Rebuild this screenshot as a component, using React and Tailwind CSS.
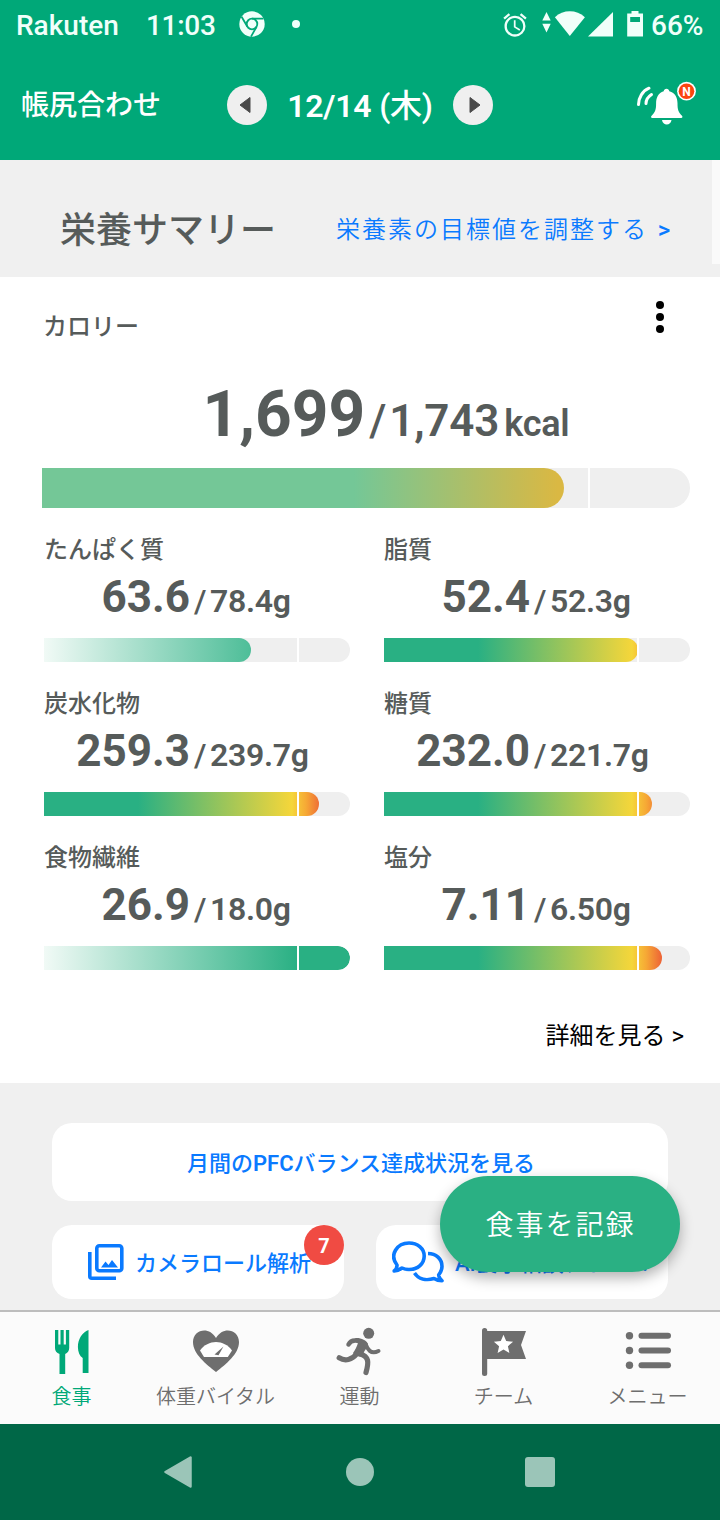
import React from "react";
import { MdAlarm } from "react-icons/md";

const NUTRIENTS = [
  { name: "たんぱく質", value: "63.6", goal: "78.4g", fill: 207, tone: "mint" },
  { name: "脂質", value: "52.4", goal: "52.3g", fill: 254, tone: "heat" },
  { name: "炭水化物", value: "259.3", goal: "239.7g", fill: 275, tone: "heat" },
  { name: "糖質", value: "232.0", goal: "221.7g", fill: 268, tone: "heat" },
  { name: "食物繊維", value: "26.9", goal: "18.0g", fill: 306, tone: "mint" },
  { name: "塩分", value: "7.11", goal: "6.50g", fill: 278, tone: "heat" },
];

const TONES = {
  mint: "bg-[linear-gradient(90deg,#f1faf6_0px,#29b083_254px)]",
  heat: "bg-[linear-gradient(90deg,#29b083_0px,#29b083_94px,#f5d63a_248px,#f6a935_262px,#ed6236_278px)]",
};

function StatusBar() {
  return (
    <div className="flex h-12 items-center pt-1 pl-4 text-[28px] leading-[46px] font-medium text-[#f0fffa]">
      <span className="w-[130px]">Rakuten</span>
      <span className="w-[93px] tracking-[-0.3px]">11:03</span>
      <svg className="mt-[-4px] h-[26px] w-[26px]" viewBox="0 0 26 26">
        <circle cx="13" cy="13" r="12.7" fill="#f0fffa" />
        <g fill="none" stroke="#00a878" strokeWidth="1.8">
          <circle cx="13" cy="13" r="5.3" />
          <path d="M13 7.7H24.5M8.4 15.7L2.6 5.8M17.6 15.7L12 25.6" />
        </g>
      </svg>
      <span className="mt-[-4px] ml-[27px] h-2 w-2 rounded-full bg-[#f0fffa]" />
      <MdAlarm className="mt-[-3px] ml-[201px] h-7 w-7" />
      <svg className="mt-[-4px] ml-[11px] h-[28px] w-[104px]" viewBox="0 0 104 28" fill="#f0fffa">
        <path d="M6.500 2l4.200 8.500H2.300zM6.500 22.500l4.200-8.700H2.300z" />
        <path d="M29.800 26L14.900 7.200C23-.6 36.500-.6 44.900 7.200z" />
        <path d="M73 2v24.500H48z" />
        <path fillRule="evenodd" d="M91.500 1h7v2.500h4.500v23H87.200v-23h4.300zM90.200 7v5h9.800V7z" />
      </svg>
      <span className="ml-[7px]">66%</span>
    </div>
  );
}

function Arrow({ flip }) {
  return (
    <button className="flex h-10 w-10 items-center justify-center rounded-full bg-[#efefef]">
      <svg
        className={flip ? "ml-1 h-[18px] w-3 rotate-180" : "mr-1 h-[18px] w-3"}
        viewBox="0 0 12 18"
      >
        <path d="M11 1.500v15L1 9z" fill="#4a4a4a" stroke="#4a4a4a" strokeLinejoin="round" strokeWidth="1" />
      </svg>
    </button>
  );
}

function Header() {
  return (
    <div className="flex h-28 items-start pl-[21px] text-white">
      <span className="mt-[37px] w-[206px] text-[28px] leading-[42px] font-medium">帳尻合わせ</span>
      <div className="mt-[37px] flex h-10 w-[266px] items-center justify-between">
        <Arrow />
        <span className="pt-[2px] text-[32px] leading-[38px] font-semibold tracking-[-0.2px] whitespace-nowrap">
          12/14 <span className="font-medium">(木)</span>
        </span>
        <Arrow flip />
      </div>
      <svg className="mt-[32px] ml-[141px] h-[48px] w-[66px]" viewBox="0 0 66 48">
        <g fill="none" stroke="#fff" strokeWidth="3" strokeLinecap="round">
          <path d="M4.500 24.500C4.500 18 8.500 10.800 15 8.200M12 23.500C12 20 14.500 16.500 17.500 14.500" />
        </g>
        <path
          d="M32.500 8.800c1.600 0 2.500 1 2.800 2.500 6 1.500 8.200 6.500 8.200 12 0 7 1 9 4.500 12.500.8 1 .5 2.200-.8 2.200H18.400c-1.500 0-1.800-1.200-.8-2.200 3.500-3.500 4.500-5.500 4.500-12.500 0-5.500 2.200-10.500 7.600-12 .3-1.500 1.200-2.500 2.800-2.500zM28 40h9.500c-.4 2.800-2.300 4.500-4.700 4.500S28.400 42.800 28 40z"
          fill="#fff"
        />
        <circle cx="52.500" cy="11.200" r="9.400" fill="#fff" />
        <circle cx="52.500" cy="11.200" r="7.800" fill="#fb4510" />
        <text x="52.500" y="15.600" textAnchor="middle" fontSize="12" fontWeight="700" fill="#fff">N</text>
      </svg>
    </div>
  );
}

function Nutrient({ item }) {
  return (
    <div className="h-[154px]">
      <div className="h-9 pt-px text-[24px] leading-9 font-medium">{item.name}</div>
      <div className="flex h-[60px] items-baseline leading-[60px] whitespace-nowrap">
        <span className="w-[146px] text-right text-[44px] font-bold">{item.value}</span>
        <span className="ml-1 w-4 text-[32px] font-medium">/</span>
        <span className="text-[32px] font-semibold tracking-[-0.3px]">{item.goal}</span>
      </div>
      <div className="relative mt-[11px] h-6 overflow-hidden rounded-r-full bg-[#efefef]">
        <div className={`h-6 rounded-r-full ${TONES[item.tone]}`} style={{ width: item.fill }} />
        <div className="absolute top-0 left-[253px] h-6 w-[2px] bg-white" />
      </div>
    </div>
  );
}

function Summary() {
  return (
    <section className="h-[806px] bg-white">
      <div className="flex h-[92px] justify-between pr-14 pl-[43px]">
        <span className="mt-8 text-[24px] leading-9 font-medium">カロリー</span>
        <div className="mt-6 flex flex-col gap-1">
          <span className="h-2 w-2 rounded-full bg-black" />
          <span className="h-2 w-2 rounded-full bg-black" />
          <span className="h-2 w-2 rounded-full bg-black" />
        </div>
      </div>
      <div className="flex h-[99px] items-baseline justify-center pt-[2px] pl-[52px] leading-[88px]">
        <span className="text-[64px] font-bold">1,699</span>
        <span className="mr-[3px] ml-1 text-[44px] font-medium">/</span>
        <span className="text-[44px] font-semibold tracking-[-0.2px]">1,743</span>
        <span className="ml-[5px] text-[36px] font-semibold tracking-[-0.2px]">kcal</span>
      </div>
      <div className="relative mr-[30px] ml-[42px] h-10 overflow-hidden rounded-r-full bg-[#efefef]">
        <div className="h-10 w-[522px] rounded-r-full bg-[linear-gradient(90deg,#74c797_0px,#74c797_312px,#dab843_516px)]" />
        <div className="absolute top-0 left-[546px] h-10 w-[2px] bg-white" />
      </div>
      <div className="mt-[23px] grid grid-cols-[306px_306px] gap-x-[34px] pl-11">
        {NUTRIENTS.map((item) => (
          <Nutrient key={item.name} item={item} />
        ))}
      </div>
      <div className="mt-[25px] pr-9 text-right text-[24px] leading-9 text-black">詳細を見る &gt;</div>
    </section>
  );
}

function Actions() {
  return (
    <section className="relative flex h-[227px] flex-col gap-6 bg-[#f0f0f0] px-[52px] pt-10 text-[22px] font-medium text-[#0a7aff]">
      <button className="h-[78px] shrink-0 rounded-[20px] bg-white pt-[3px] pl-[2px] leading-[75px]">
        月間の<span className="font-semibold">PFC</span>バランス達成状況を見る
      </button>
      <div className="flex justify-between">
        <div className="relative flex h-[74px] w-[292px] items-center rounded-[20px] bg-white pl-9 whitespace-nowrap">
          <svg className="h-9 w-9" viewBox="0 0 36 36">
            <rect x="8.800" y="1.800" width="25" height="25" rx="2.500" fill="none" stroke="#0a7aff" strokeWidth="3.600" />
            <path d="M1.800 8v24.200a2 2 0 0 0 2 2H28" fill="none" stroke="#0a7aff" strokeWidth="3.600" />
            <path d="M13 23.500l4.500-6 3 3.500 3.500-5 6 7.500z" fill="#0a7aff" />
          </svg>
          <span className="ml-[11px] pt-[2px]">カメラロール解析</span>
          <span className="absolute top-0 right-0 flex h-10 w-10 items-center justify-center rounded-full bg-[#f04b43] pt-px text-[20px] font-bold text-white">
            7
          </span>
        </div>
        <div className="flex h-[74px] w-[292px] items-center rounded-[20px] bg-white pl-4 whitespace-nowrap">
          <svg className="h-[42px] w-[52px]" viewBox="0 0 52 42" fill="none" stroke="#0a7aff" strokeWidth="3.600" strokeLinejoin="round">
            <path d="M2.200 30c2-1.600 3-3.600 2.800-6C-3 14 5 2 17 2c8.500 0 15.200 5.500 15.200 13S26 28.500 17 28.500c-2.600 0-5-.5-7-1.500-2.400 1.800-5 2.800-7.800 3z" />
            <path d="M36 12.500C44 12.500 50 18 50 25.500c0 3.500-1.400 6-3.300 8.300.2 2.500 1.200 4.600 3.300 6-3.500 0-6-1-8-2.300-8 2.500-15.500.5-19.500-5.500" />
          </svg>
          <span className="ml-[11px] pt-[2px]">AI食事相談アドバ...</span>
        </div>
      </div>
      <button className="absolute top-[93px] left-[440px] h-24 w-60 rounded-full bg-[#2ab083] pt-[4px] pl-px text-[28px] leading-[92px] font-[350] tracking-[2px] text-white shadow-[0_6px_14px_rgba(0,0,0,0.3)]">
        食事を記録
      </button>
    </section>
  );
}

const TABS = [
  {
    label: "食事",
    icon: (
      <path d="M11 6h3.300v14.500h2.200V6h3.200v14.500h2.200V6h3.300v18c0 3-1.600 5-4 6v20H15.500V30C12.600 29 11 27 11 24zM44.500 6v43h-5.800V34c-3-2-4.800-6-4.800-11 0-8 4.500-15 10.600-17z" />
    ),
  },
  {
    label: "体重バイタル",
    icon: (
      <>
        <path d="M28 48C18 40 5 30 5 18 5 5.500 21 1.500 28 14 35 1.500 51 5.500 51 18c0 12-13 22-23 30z" />
        <path d="M12 26.500c8-11.500 24-11.500 32 0l-4.200 6.500H16z" fill="#fff" />
        <path d="M35.500 22.500l-5 8.700-4-.6z" />
      </>
    ),
  },
  {
    label: "運動",
    icon: (
      <>
        <circle cx="36.700" cy="9.300" r="5.500" />
        <path d="M23 14.200C28 13.500 34.500 16 36 20c-.5 4-3.500 6-4.500 9.500l-3 3-5.500-.5-2-3c2-3 4-6.500 5-10z" />
        <g fill="none" stroke="#6e6e6e" strokeLinecap="round">
          <path d="M16.500 20.500C18.500 16.500 22 15.500 28 17.500" strokeWidth="4.500" />
          <path d="M7.200 33.800C13 37.500 20 36 25 29.500" strokeWidth="5.200" />
          <path d="M33.500 20C35.500 25 38.500 31 46.500 27" strokeWidth="4" />
          <path d="M28 30C37 32.500 37 38 34 48.500" strokeWidth="5.200" />
        </g>
      </>
    ),
  },
  {
    label: "チーム",
    icon: (
      <>
        <rect x="6" y="4" width="5.200" height="48" rx="2.500" />
        <path d="M9 7h41l-5 14 5 14H9z" />
        <path d="M27.500 10.800l2.700 6.300 6.900.6-5.200 4.500 1.500 6.700-5.900-3.500-5.900 3.500 1.500-6.700-5.200-4.500 6.900-.6z" fill="#fff" />
      </>
    ),
  },
  {
    label: "メニュー",
    icon: (
      <>
        <circle cx="9.500" cy="11.800" r="3.700" />
        <circle cx="9.500" cy="26.500" r="3.700" />
        <circle cx="9.500" cy="41.200" r="3.700" />
        <rect x="18.500" y="8.800" width="32.500" height="6" rx="3" />
        <rect x="18.500" y="23.500" width="32.500" height="6" rx="3" />
        <rect x="18.500" y="38.200" width="32.500" height="6" rx="3" />
      </>
    ),
  },
];

function TabBar() {
  return (
    <nav className="grid h-[114px] grid-cols-5 border-t-2 border-[#bdbdbd] bg-[#fbfbfb]">
      {TABS.map((tab, i) => (
        <div
          key={tab.label}
          className={
            i === 0
              ? "flex flex-col items-center pt-3 text-[#00a878]"
              : "flex flex-col items-center pt-3 text-[#6e6e6e]"
          }
        >
          <svg className="h-14 w-14" viewBox="0 0 56 56" fill="currentColor">
            {tab.icon}
          </svg>
          <span className="pt-px pr-px text-[20px] leading-8 font-[350]">{tab.label}</span>
        </div>
      ))}
    </nav>
  );
}

function SystemNav() {
  return (
    <div className="flex h-24 items-center justify-center bg-[#006747] pr-px">
      <svg className="h-8 w-7" viewBox="0 0 28 32">
        <path d="M26.500 1.500v29L1.500 16z" fill="#9bc5b8" stroke="#9bc5b8" strokeWidth="2.500" strokeLinejoin="round" />
      </svg>
      <span className="mr-[151px] ml-[154px] h-7 w-7 rounded-full bg-[#9bc5b8]" />
      <span className="h-[30px] w-[30px] rounded-[3px] bg-[#9bc5b8]" />
    </div>
  );
}

export default function App() {
  return (
    <div className="h-[1520px] w-[720px] overflow-hidden bg-[#f0f0f0] font-['Roboto','Noto_Sans_CJK_JP',sans-serif] text-[#565b5a]" lang="ja">
      <header className="bg-[#00a878]">
        <StatusBar />
        <Header />
      </header>
      <div className="relative flex h-[117px] items-center pt-6 pl-[60px]">
        <h1 className="w-[276px] text-[36px] leading-[54px] font-medium">栄養サマリー</h1>
        <a className="pb-[2px] text-[24px] leading-9 font-[350] tracking-[2px] whitespace-nowrap text-[#0a7aff]">
          栄養素の目標値を調整する <span className="ml-[2px] font-medium">&gt;</span>
        </a>
        <div className="absolute top-0 right-0 h-[104px] w-2 bg-[#fafafa]" />
      </div>
      <Summary />
      <Actions />
      <TabBar />
      <SystemNav />
    </div>
  );
}
